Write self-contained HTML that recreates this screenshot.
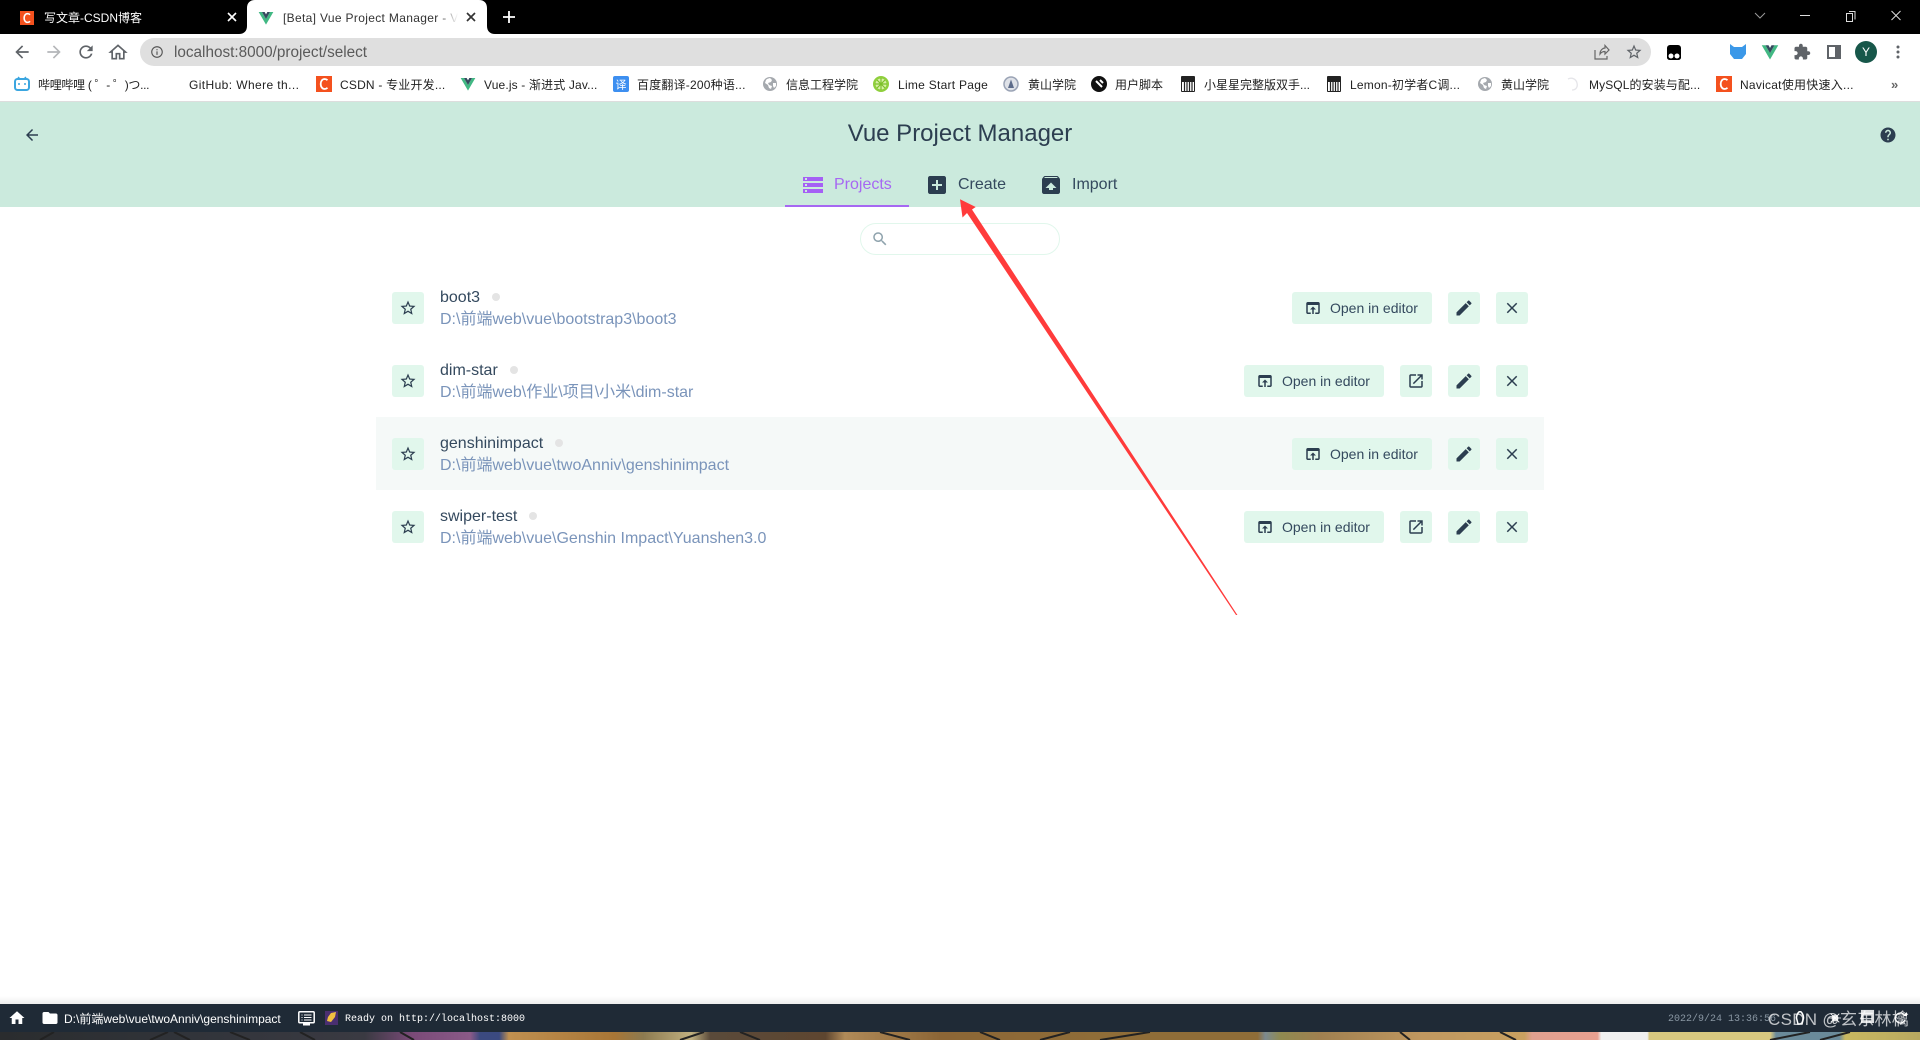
<!DOCTYPE html>
<html lang="zh"><head><meta charset="utf-8"><title>Vue Project Manager</title>
<style>
*{box-sizing:border-box}
html,body{margin:0;padding:0;width:1920px;height:1040px;overflow:hidden;background:#fff}
body{position:relative;font-family:"Liberation Sans","Noto Sans CJK SC",sans-serif;color:#2c3e50}
.a{position:absolute;white-space:nowrap}
svg.i{position:absolute;display:block}
.bm{position:absolute;top:76px;height:18px;line-height:18px;font-size:12px;color:#222;white-space:nowrap}
.fav{position:absolute;top:76px;width:16px;height:16px}
.btn{position:absolute;height:32px;background:#e1f7ec;border-radius:3px}
.sq{width:32px}
.ed{width:140px;font-size:14px;line-height:32px;color:#34495e}
.ed span{position:absolute;left:38px;top:0}
.name{position:absolute;left:440px;font-size:16px;line-height:20px;color:#34495e;white-space:nowrap}
.path{position:absolute;left:440px;font-size:16px;line-height:20px;color:#7a94ba;white-space:nowrap}
.dot{position:absolute;width:8px;height:8px;border-radius:50%;background:#e4e4e4}
.nav{position:absolute;top:175px;font-size:16px;line-height:20px;white-space:nowrap;color:#34495e}
</style></head><body>
<svg width="0" height="0" style="position:absolute"><defs>
<symbol id="star" viewBox="0 0 24 24"><path d="M22 9.24l-7.19-.62L12 2 9.19 8.63 2 9.24l5.46 4.73L5.82 21 12 17.27 18.18 21l-1.63-7.03L22 9.24zM12 15.4l-3.76 2.27 1-4.28-3.32-2.88 4.38-.38L12 6.1l1.71 4.04 4.38.38-3.32 2.88 1 4.28L12 15.4z"/></symbol>
<symbol id="oib" viewBox="0 0 24 24"><path d="M19 4H5c-1.11 0-2 .9-2 2v12c0 1.1.89 2 2 2h4v-2H5V8h14v10h-4v2h4c1.1 0 2-.9 2-2V6c0-1.1-.89-2-2-2zm-7 6l-4 4h3v6h2v-6h3l-4-4z"/></symbol>
<symbol id="oin" viewBox="0 0 24 24"><path d="M19 19H5V5h7V3H5c-1.11 0-2 .9-2 2v14c0 1.1.89 2 2 2h14c1.1 0 2-.9 2-2v-7h-2v7zM14 3v2h3.59l-9.83 9.83 1.41 1.41L19 6.41V10h2V3h-7z"/></symbol>
<symbol id="edit" viewBox="0 0 24 24"><path d="M3 17.25V21h3.75L17.81 9.94l-3.75-3.75L3 17.25zM20.71 7.04c.39-.39.39-1.02 0-1.41l-2.34-2.34c-.39-.39-1.02-.39-1.41 0l-1.83 1.83 3.75 3.75 1.83-1.83z"/></symbol>
<symbol id="close" viewBox="0 0 24 24"><path d="M19 6.41L17.59 5 12 10.59 6.41 5 5 6.41 10.59 12 5 17.59 6.41 19 12 13.41 17.59 19 19 17.59 13.41 12z"/></symbol>
<symbol id="vue" viewBox="0 0 24 24"><path fill="#41b883" d="M1 3h5l6 10.5L18 3h5L12 22z"/><path fill="#35495e" d="M6 3h4l2 3.6L14 3h4l-6 10.5z"/></symbol>
<symbol id="csdn" viewBox="0 0 16 16"><rect width="16" height="16" fill="#f4511e"/><path d="M11.5 4.2A4.4 4.4 0 0 0 8.6 3C6.3 3 4.7 5.1 4.7 8s1.6 5 3.9 5c1.1 0 2.100-.4 2.900-1.200" fill="none" stroke="#fff" stroke-width="1.800"/></symbol>
<symbol id="globe" viewBox="0 0 16 16"><circle cx="8" cy="8" r="7" fill="#a5a9ae"/><path d="M5 3l3-1 2 2-1 2-3 1 1 2 3 1-1 3-2-1-1-3-3-2 1-3zM11 7l3 0 0 3-2 2-1-2z" fill="#fff"/></symbol>
<symbol id="piano" viewBox="0 0 16 16"><rect x="1" width="14" height="16" rx="1" fill="#222"/><rect x="2" y="6" width="12" height="9" fill="#fff"/><path d="M4.500 6v9M7 6v9M9.500 6v9M12 6v9" stroke="#222" stroke-width="1.200"/></symbol>
</defs></svg>

<!-- Tab strip -->
<div class="a" style="left:0;top:0;width:1920px;height:34px;background:#000"></div>
<svg class="i" style="left:20px;top:11px" width="14" height="14"><use href="#csdn" width="14" height="14"/></svg>
<div class="a" style="left:44px;top:9px;font-size:12px;line-height:18px;color:#fff">写文章-CSDN博客</div>
<svg class="i" style="left:226px;top:11px" width="12" height="12" viewBox="0 0 12 12"><path d="M2 2l8 8M10 2l-8 8" stroke="#fff" stroke-width="1.600"/></svg>
<svg class="i" style="left:239px;top:0" width="256" height="34" viewBox="0 0 256 34"><path d="M0 34c5 0 8-3 8-8V8c0-5 3-8 8-8h224c5 0 8 3 8 8v18c0 5 3 8 8 8z" fill="#fff"/></svg>
<svg class="i" style="left:258px;top:10px" width="16" height="16"><use href="#vue" width="16" height="16"/></svg>
<div class="a" style="left:283px;top:9px;width:175px;overflow:hidden;font-size:12px;line-height:18px;color:#333;letter-spacing:.33px">[Beta] Vue Project Manager - Vue<div style="position:absolute;right:0;top:0;width:20px;height:18px;background:linear-gradient(90deg,rgba(255,255,255,0),#fff)"></div></div>
<svg class="i" style="left:465px;top:12px" width="12" height="12" viewBox="0 0 12 12"><path d="M2 1l8 8M10 1l-8 8" stroke="#333" stroke-width="1.700"/></svg>
<svg class="i" style="left:503px;top:11px" width="12" height="12" viewBox="0 0 12 12"><path d="M6 0v12M0 6h12" stroke="#fff" stroke-width="1.800"/></svg>
<svg class="i" style="left:1752px;top:8px" width="160" height="20" viewBox="0 0 160 20" fill="none" stroke="#ddd"><path d="M3 5l5 5 5-5" stroke="#999"/><path d="M48 7.500h10"/><path d="M97 3.500h6v8M94.500 5.500h6v8h-6z"/><path d="M139.500 3l9 9M148.500 3l-9 9"/></svg>

<!-- Toolbar -->
<div class="a" style="left:0;top:34px;width:1920px;height:68px;background:#fff;border-bottom:1px solid #ddd"></div>
<svg class="i" style="left:12px;top:42px" width="20" height="20" viewBox="0 0 24 24"><path fill="#5f6368" d="M20 11H7.830l5.590-5.590L12 4l-8 8 8 8 1.410-1.410L7.830 13H20v-2z"/></svg>
<svg class="i" style="left:44px;top:42px" width="20" height="20" viewBox="0 0 24 24"><path fill="#b4b6b9" d="M12 4l-1.410 1.410L16.170 11H4v2h12.170l-5.580 5.590L12 20l8-8z"/></svg>
<svg class="i" style="left:76px;top:42px" width="20" height="20" viewBox="0 0 24 24"><path fill="#5f6368" d="M17.650 6.350A7.958 7.958 0 0 0 12 4c-4.420 0-7.990 3.580-7.990 8s3.570 8 7.990 8c3.730 0 6.840-2.550 7.730-6h-2.080A5.990 5.990 0 0 1 12 18c-3.310 0-6-2.690-6-6s2.690-6 6-6c1.660 0 3.140.69 4.220 1.780L13 11h7V4l-2.350 2.350z"/></svg>
<svg class="i" style="left:108px;top:42px" width="20" height="20" viewBox="0 0 24 24"><path fill="none" stroke="#5f6368" stroke-width="2" d="M10 20v-6h4v6h5v-8h2L12 4 3 12h2v8z"/></svg>
<div class="a" style="left:140px;top:38px;width:1511px;height:28px;background:#dfdfdf;border-radius:14px"></div>
<svg class="i" style="left:150px;top:45px" width="14" height="14" viewBox="0 0 24 24"><path fill="#555" d="M11 17h2v-6h-2v6zm1-15C6.480 2 2 6.480 2 12s4.480 10 10 10 10-4.480 10-10S17.520 2 12 2zm0 18c-4.410 0-8-3.590-8-8s3.590-8 8-8 8 3.590 8 8-3.590 8-8 8zM11 9h2V7h-2v2z"/></svg>
<div class="a" style="left:174px;top:44px;font-size:15.300px;line-height:18px;color:#5a5a5a">localhost:8000/project/select</div>
<svg class="i" style="left:1594px;top:44px" width="16" height="16" viewBox="0 0 16 16" fill="none" stroke="#666" stroke-width="1.200"><path d="M1 6v9h12v-3M6 10c0-4 3-6 5-6V1.500L15 6l-4 4V7.500c-2 0-4 1-5 2.500z"/></svg>
<svg class="i" style="left:1625px;top:43px" width="18" height="18"><use href="#star" width="18" height="18" fill="#5f6368"/></svg>
<svg class="i" style="left:1667px;top:44px" width="14" height="17" viewBox="0 0 14 17"><path d="M3 1h8a3 3 0 0 1 3 3v10a3 3 0 0 1-3 2H3a3 3 0 0 1-3-2V4a3 3 0 0 1 3-3z" fill="#000"/><circle cx="4" cy="12" r="2.500" fill="#fff"/><circle cx="10" cy="12" r="2.500" fill="#fff"/></svg>
<svg class="i" style="left:1730px;top:44px" width="16" height="16" viewBox="0 0 16 16"><path d="M0 0l4 3h8l4-3v10l-4 5H4L0 10z" fill="#3b98e8"/></svg>
<svg class="i" style="left:1761px;top:43px" width="18" height="18"><use href="#vue" width="18" height="18"/></svg>
<svg class="i" style="left:1793px;top:43px" width="18" height="18" viewBox="0 0 24 24"><path fill="#5f6368" d="M20.500 11H19V7c0-1.100-.9-2-2-2h-4V3.500C13 2.120 11.880 1 10.500 1S8 2.120 8 3.500V5H4c-1.100 0-1.990.9-1.990 2v3.800H3.500c1.490 0 2.700 1.210 2.700 2.700s-1.210 2.700-2.700 2.700H2V20c0 1.100.9 2 2 2h3.800v-1.500c0-1.490 1.210-2.700 2.700-2.700s2.700 1.210 2.700 2.700V22H17c1.100 0 2-.9 2-2v-4h1.500c1.380 0 2.500-1.120 2.500-2.500S21.880 11 20.500 11z"/></svg>
<div class="a" style="left:1827px;top:45px;width:14px;height:14px;border:2px solid #5f6368;border-right-width:6px"></div>
<div class="a" style="left:1855px;top:41px;width:22px;height:22px;border-radius:50%;background:#17574a;color:#fff;font-size:12px;line-height:22px;text-align:center">Y</div>
<svg class="i" style="left:1896px;top:45px" width="4" height="14" viewBox="0 0 4 14"><circle cx="2" cy="2" r="1.500" fill="#5f6368"/><circle cx="2" cy="7" r="1.500" fill="#5f6368"/><circle cx="2" cy="12" r="1.500" fill="#5f6368"/></svg>

<!-- Bookmarks -->
<svg class="fav" style="left:14px" viewBox="0 0 16 16"><path d="M4 1l2 2M12 1l-2 2" stroke="#3ba6e0" stroke-width="1.400"/><rect x="1" y="3" width="14" height="11" rx="2.500" fill="none" stroke="#3ba6e0" stroke-width="2"/><path d="M5 7v2M11 7v2" stroke="#3ba6e0" stroke-width="1.500"/></svg>
<div class="bm" style="left:38px;letter-spacing:-.3px">哔哩哔哩 ( ゜- ゜)つ...</div>
<div class="bm" style="left:189px;letter-spacing:.4px">GitHub: Where th...</div>
<svg class="fav" style="left:316px"><use href="#csdn" width="16" height="16"/></svg>
<div class="bm" style="left:340px;letter-spacing:.2px">CSDN - 专业开发...</div>
<svg class="fav" style="left:460px"><use href="#vue" width="16" height="16"/></svg>
<div class="bm" style="left:484px;letter-spacing:.15px">Vue.js - 渐进式 Jav...</div>
<svg class="fav" style="left:613px" viewBox="0 0 16 16"><rect width="16" height="16" rx="2" fill="#3d8ff0"/><text x="8" y="12.500" font-size="11" fill="#fff" text-anchor="middle" font-family="Noto Sans CJK SC">译</text></svg>
<div class="bm" style="left:637px;letter-spacing:.2px">百度翻译-200种语...</div>
<svg class="fav" style="left:762px"><use href="#globe" width="16" height="16"/></svg>
<div class="bm" style="left:786px">信息工程学院</div>
<svg class="fav" style="left:873px" viewBox="0 0 16 16"><circle cx="8" cy="8" r="8" fill="#8fcf3c"/><circle cx="8" cy="8" r="5.500" fill="#d8f0a8"/><path d="M8 2v12M2 8h12M4 4l8 8M12 4l-8 8" stroke="#7cc02a" stroke-width="1.200"/></svg>
<div class="bm" style="left:898px;letter-spacing:.27px">Lime Start Page</div>
<svg class="fav" style="left:1003px" viewBox="0 0 16 16"><circle cx="8" cy="8" r="7" fill="#dfe2e8" stroke="#9aa3b5" stroke-width="1.500"/><path d="M8 3.500L5 12h6z" fill="#5d6c8a"/></svg>
<div class="bm" style="left:1028px">黄山学院</div>
<svg class="fav" style="left:1091px" viewBox="0 0 16 16"><circle cx="8" cy="8" r="8" fill="#111"/><path d="M5 5l6 6M9 4l3 3" stroke="#fff" stroke-width="2"/></svg>
<div class="bm" style="left:1115px">用户脚本</div>
<svg class="fav" style="left:1180px"><use href="#piano" width="16" height="16"/></svg>
<div class="bm" style="left:1204px">小星星完整版双手...</div>
<svg class="fav" style="left:1326px"><use href="#piano" width="16" height="16"/></svg>
<div class="bm" style="left:1350px;letter-spacing:.2px">Lemon-初学者C调...</div>
<svg class="fav" style="left:1477px"><use href="#globe" width="16" height="16"/></svg>
<div class="bm" style="left:1501px">黄山学院</div>
<svg class="fav" style="left:1565px;opacity:.25" viewBox="0 0 16 16"><path d="M3 3c4-2 8 0 9 4s-1 7-5 7" fill="none" stroke="#99a" stroke-width="1.300"/></svg>
<div class="bm" style="left:1589px;letter-spacing:.1px">MySQL的安装与配...</div>
<svg class="fav" style="left:1716px"><use href="#csdn" width="16" height="16"/></svg>
<div class="bm" style="left:1740px;letter-spacing:.25px">Navicat使用快速入...</div>
<div class="bm" style="left:1891px;color:#666;font-size:13px;font-weight:bold">»</div>

<!-- Header -->
<div class="a" style="left:0;top:102px;width:1920px;height:105px;background:#cbeadd"></div>
<svg class="i" style="left:23px;top:126px" width="18" height="18" viewBox="0 0 24 24"><path fill="#2c3e50" d="M20 11H7.830l5.590-5.590L12 4l-8 8 8 8 1.410-1.410L7.830 13H20v-2z"/></svg>
<div class="a" style="left:0;top:119px;width:1920px;text-align:center;font-size:24px;line-height:30px;color:#2c3e50">Vue Project Manager</div>
<svg class="i" style="left:1879px;top:126px" width="18" height="18" viewBox="0 0 24 24"><path fill="#2c3e50" d="M12 2C6.480 2 2 6.480 2 12s4.480 10 10 10 10-4.480 10-10S17.520 2 12 2zm1 17h-2v-2h2v2zm2.070-7.750l-.9.920C13.450 12.900 13 13.500 13 15h-2v-.5c0-1.100.45-2.100 1.170-2.830l1.240-1.260c.37-.36.59-.86.59-1.410 0-1.100-.9-2-2-2s-2 .9-2 2H8c0-2.210 1.790-4 4-4s4 1.790 4 4c0 .88-.36 1.680-.93 2.250z"/></svg>
<svg class="i" style="left:801px;top:173px" width="24" height="24" viewBox="0 0 24 24"><path fill="#a560f5" d="M2 20h20v-4H2v4zm2-3h2v2H4v-2zM2 4v4h20V4H2zm4 3H4V5h2v2zm-4 7h20v-4H2v4zm2-3h2v2H4v-2z"/></svg>
<div class="nav" style="left:834px;color:#a668f2">Projects</div>
<div class="a" style="left:785px;top:205px;width:124px;height:2px;background:#a668f2"></div>
<svg class="i" style="left:925px;top:173px" width="24" height="24" viewBox="0 0 24 24"><path fill="#2c3e50" d="M19 3H5c-1.110 0-2 .9-2 2v14c0 1.100.89 2 2 2h14c1.100 0 2-.9 2-2V5c0-1.100-.9-2-2-2zm-2 10h-4v4h-2v-4H7v-2h4V7h2v4h4v2z"/></svg>
<div class="nav" style="left:958px">Create</div>
<svg class="i" style="left:1039px;top:173px" width="24" height="24" viewBox="0 0 24 24"><path fill="#2c3e50" d="M20.550 5.220l-1.390-1.680C18.880 3.210 18.470 3 18 3H6c-.47 0-.88.21-1.150.55L3.460 5.220C3.170 5.570 3 6.010 3 6.500V19c0 1.100.89 2 2 2h14c1.100 0 2-.9 2-2V6.500c0-.49-.17-.93-.45-1.280zM12 9.500l5.500 5.500H14v2h-4v-2H6.500L12 9.500zM5.120 5l.82-1h12l.93 1H5.120z"/></svg>
<div class="nav" style="left:1072px">Import</div>

<!-- Search -->
<div class="a" style="left:860px;top:223px;width:200px;height:32px;border:1px solid #e1f7ec;border-radius:16px"></div>
<svg class="i" style="left:871px;top:230px" width="18" height="18" viewBox="0 0 24 24"><path fill="#8fa3ad" d="M15.500 14h-.79l-.28-.27C15.410 12.590 16 11.110 16 9.500 16 5.910 13.090 3 9.500 3S3 5.910 3 9.500 5.910 16 9.500 16c1.610 0 3.090-.59 4.230-1.570l.27.28v.79l5 4.990L20.490 19l-4.990-5zm-6 0C7.010 14 5 11.990 5 9.500S7.010 5 9.500 5 14 7.010 14 9.500 11.990 14 9.500 14z"/></svg>

<!-- Hover row -->
<div class="a" style="left:376px;top:417px;width:1168px;height:73px;background:#f5f9f8"></div>

<!-- Row 1 -->
<div class="btn sq" style="left:392px;top:292px"><svg class="i" style="left:7px;top:7px" width="18" height="18" fill="#2c3e50"><use href="#star" width="18" height="18"/></svg></div>
<div class="name" style="top:288px">boot3</div><div class="dot" style="left:492px;top:293px"></div>
<div class="path" style="top:310px">D:\前端web\vue\bootstrap3\boot3</div>
<div class="btn ed" style="left:1292px;top:292px"><svg class="i" style="left:12px;top:7px" width="18" height="18" fill="#2c3e50"><use href="#oib" width="18" height="18"/></svg><span>Open in editor</span></div>
<div class="btn sq" style="left:1448px;top:292px"><svg class="i" style="left:6px;top:6px" width="20" height="20" fill="#2c3e50"><use href="#edit" width="20" height="20"/></svg></div>
<div class="btn sq" style="left:1496px;top:292px"><svg class="i" style="left:7px;top:7px" width="18" height="18" fill="#2c3e50"><use href="#close" width="18" height="18"/></svg></div>

<!-- Row 2 -->
<div class="btn sq" style="left:392px;top:365px"><svg class="i" style="left:7px;top:7px" width="18" height="18" fill="#2c3e50"><use href="#star" width="18" height="18"/></svg></div>
<div class="name" style="top:361px">dim-star</div><div class="dot" style="left:510px;top:366px"></div>
<div class="path" style="top:383px">D:\前端web\作业\项目\小米\dim-star</div>
<div class="btn ed" style="left:1244px;top:365px"><svg class="i" style="left:12px;top:7px" width="18" height="18" fill="#2c3e50"><use href="#oib" width="18" height="18"/></svg><span>Open in editor</span></div>
<div class="btn sq" style="left:1400px;top:365px"><svg class="i" style="left:7px;top:7px" width="18" height="18" fill="#2c3e50"><use href="#oin" width="18" height="18"/></svg></div>
<div class="btn sq" style="left:1448px;top:365px"><svg class="i" style="left:6px;top:6px" width="20" height="20" fill="#2c3e50"><use href="#edit" width="20" height="20"/></svg></div>
<div class="btn sq" style="left:1496px;top:365px"><svg class="i" style="left:7px;top:7px" width="18" height="18" fill="#2c3e50"><use href="#close" width="18" height="18"/></svg></div>

<!-- Row 3 -->
<div class="btn sq" style="left:392px;top:438px"><svg class="i" style="left:7px;top:7px" width="18" height="18" fill="#2c3e50"><use href="#star" width="18" height="18"/></svg></div>
<div class="name" style="top:434px">genshinimpact</div><div class="dot" style="left:555px;top:439px"></div>
<div class="path" style="top:456px">D:\前端web\vue\twoAnniv\genshinimpact</div>
<div class="btn ed" style="left:1292px;top:438px"><svg class="i" style="left:12px;top:7px" width="18" height="18" fill="#2c3e50"><use href="#oib" width="18" height="18"/></svg><span>Open in editor</span></div>
<div class="btn sq" style="left:1448px;top:438px"><svg class="i" style="left:6px;top:6px" width="20" height="20" fill="#2c3e50"><use href="#edit" width="20" height="20"/></svg></div>
<div class="btn sq" style="left:1496px;top:438px"><svg class="i" style="left:7px;top:7px" width="18" height="18" fill="#2c3e50"><use href="#close" width="18" height="18"/></svg></div>

<!-- Row 4 -->
<div class="btn sq" style="left:392px;top:511px"><svg class="i" style="left:7px;top:7px" width="18" height="18" fill="#2c3e50"><use href="#star" width="18" height="18"/></svg></div>
<div class="name" style="top:507px">swiper-test</div><div class="dot" style="left:529px;top:512px"></div>
<div class="path" style="top:529px">D:\前端web\vue\Genshin Impact\Yuanshen3.0</div>
<div class="btn ed" style="left:1244px;top:511px"><svg class="i" style="left:12px;top:7px" width="18" height="18" fill="#2c3e50"><use href="#oib" width="18" height="18"/></svg><span>Open in editor</span></div>
<div class="btn sq" style="left:1400px;top:511px"><svg class="i" style="left:7px;top:7px" width="18" height="18" fill="#2c3e50"><use href="#oin" width="18" height="18"/></svg></div>
<div class="btn sq" style="left:1448px;top:511px"><svg class="i" style="left:6px;top:6px" width="20" height="20" fill="#2c3e50"><use href="#edit" width="20" height="20"/></svg></div>
<div class="btn sq" style="left:1496px;top:511px"><svg class="i" style="left:7px;top:7px" width="18" height="18" fill="#2c3e50"><use href="#close" width="18" height="18"/></svg></div>

<!-- Red arrow -->
<svg class="i" style="left:0;top:0;pointer-events:none" width="1920" height="1040"><polygon points="960,199.300 962.500,217.500 967,213 1236,615 1237.400,615 972,209.500 975.700,207" fill="#ff3b3b"/></svg>

<!-- Status bar -->
<div class="a" style="left:0;top:996px;width:1920px;height:8px;background:linear-gradient(180deg,rgba(0,0,0,0),rgba(0,0,0,.07))"></div>
<div class="a" style="left:0;top:1004px;width:1920px;height:28px;background:#1f2a36"></div>
<svg class="i" style="left:8px;top:1009px" width="18" height="18" viewBox="0 0 24 24"><path fill="#fff" d="M10 20v-6h4v6h5v-8h3L12 3 2 12h3v8z"/></svg>
<svg class="i" style="left:41px;top:1009px" width="18" height="18" viewBox="0 0 24 24"><path fill="#fff" d="M10 4H4c-1.100 0-2 .9-2 2v12c0 1.100.9 2 2 2h16c1.100 0 2-.9 2-2V8c0-1.100-.9-2-2-2h-8l-2-2z"/></svg>
<div class="a" style="left:64px;top:1011px;font-size:12px;line-height:16px;color:#fff">D:\前端web\vue\twoAnniv\genshinimpact</div>
<svg class="i" style="left:298px;top:1011px" width="17" height="15" viewBox="0 0 17 15"><rect x=".8" y=".8" width="15.400" height="11" rx="1" fill="none" stroke="#fff" stroke-width="1.500"/><path d="M3.500 4h1M6 4h7.500M3.500 6.500h1M6 6.500h7.500M3.500 9h1M6 9h7.500" stroke="#fff"/><rect x="5" y="12" width="7" height="2.500" fill="#fff"/></svg>
<svg class="i" style="left:325px;top:1011px" width="13" height="14" viewBox="0 0 13 14"><rect width="13" height="14" fill="#4a2f70"/><path d="M6 2l5-1-1 5-4 5-4-1 1-4z" fill="#f0c040"/></svg>
<div class="a" style="left:345px;top:1013px;font-family:'Liberation Mono',monospace;font-size:10px;line-height:14px;color:#fff">Ready on http://localhost:8000</div>
<div class="a" style="left:1668px;top:1013px;font-family:'Liberation Mono',monospace;font-size:10px;line-height:14px;color:#8a97a3">2022/9/24 13:36:56</div>
<svg class="i" style="left:1794px;top:1011px" width="12" height="14" viewBox="0 0 12 14"><path d="M6 0c2.500 2 3.500 4 3.500 7L8 13H4L2.500 7C2.500 4 3.500 2 6 0z" fill="none" stroke="#fff" stroke-width="1.500"/></svg>
<svg class="i" style="left:1829px;top:1012px" width="12" height="12" viewBox="0 0 14 14"><circle cx="7" cy="7" r="4" fill="#fff" opacity=".85"/><path d="M0 7h14M2 2l10 10M12 2L2 12" stroke="#fff"/></svg>
<svg class="i" style="left:1860px;top:1009px" width="15" height="15" viewBox="0 0 16 16"><rect x="1" y="1" width="14" height="14" fill="#fff" opacity=".85"/><rect x="4" y="7" width="8" height="5" fill="#1f2a36"/></svg>
<svg class="i" style="left:1893px;top:1011px" width="15" height="14" viewBox="0 0 15 14"><path d="M12 5a5 5 0 1 0 0 4" fill="none" stroke="#fff" stroke-width="1.300"/><path d="M10 5h4V1z" fill="#fff"/></svg>
<div class="a" style="left:1768px;top:1010px;font-size:17px;line-height:20px;letter-spacing:.3px;color:rgba(255,255,255,.72);font-family:'Liberation Sans','Noto Sans CJK SC',sans-serif">CSDN @玄东林檎</div>

<!-- Desktop wallpaper strip -->
<svg class="i" style="left:0;top:1032px" width="1920" height="8" viewBox="0 0 1920 8">
<defs><linearGradient id="w" x1="0" x2="1" y1="0" y2="0">
<stop offset="0" stop-color="#2a2c2e"/><stop offset=".1" stop-color="#31343a"/><stop offset=".19" stop-color="#3a3a42"/><stop offset=".215" stop-color="#7a4a78"/><stop offset=".245" stop-color="#8a5a88"/><stop offset=".25" stop-color="#3b4a80"/><stop offset=".26" stop-color="#3b4a80"/><stop offset=".265" stop-color="#c09050"/><stop offset=".32" stop-color="#a87636"/><stop offset=".335" stop-color="#8c7a50"/><stop offset=".36" stop-color="#c0b080"/><stop offset=".37" stop-color="#5a4a3a"/><stop offset=".43" stop-color="#5e4630"/><stop offset=".44" stop-color="#b08a58"/><stop offset=".49" stop-color="#8c6636"/><stop offset=".57" stop-color="#8f6d38"/><stop offset=".655" stop-color="#8f6d38"/><stop offset=".659" stop-color="#7c8a90"/><stop offset=".667" stop-color="#8f8a50"/><stop offset=".6875" stop-color="#a08050"/><stop offset=".741" stop-color="#c09860"/><stop offset=".794" stop-color="#c8a060"/><stop offset=".798" stop-color="#e0a090"/><stop offset=".832" stop-color="#e8a090"/><stop offset=".834" stop-color="#f0f0f0"/><stop offset=".858" stop-color="#f0f0f0"/><stop offset=".859" stop-color="#d8c880"/><stop offset=".922" stop-color="#d8c880"/><stop offset=".925" stop-color="#6a8a9a"/><stop offset=".958" stop-color="#6a8a9a"/><stop offset=".961" stop-color="#c8b860"/><stop offset="1" stop-color="#b8a860"/>
</linearGradient></defs>
<rect width="1920" height="8" fill="url(#w)"/>
<path d="M40 8l14-8M150 8l18-8M190 8l-16-8M230 0l20 8M300 0l15 8M400 0l14 8M680 8l24-8M760 8l-20-8M880 0l30 8M980 0l20 8M1040 8l30-8M1100 8l50-8M1400 0l10 8M1500 0l16 8M1770 8l40-8M1820 8l30-8" stroke="#222" stroke-width="2" fill="none"/>
</svg>
</body></html>
